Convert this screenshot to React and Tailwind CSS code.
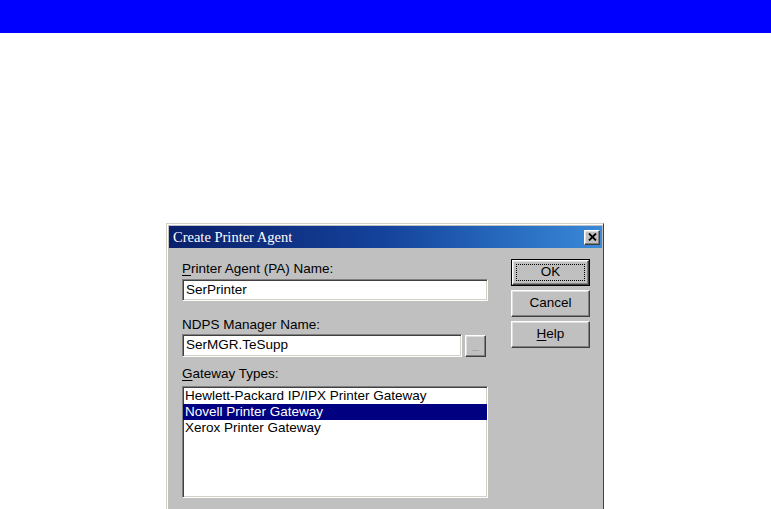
import React from "react";

const sunken =
  "border-t border-l border-t-[#808080] border-l-[#808080] border-b border-r border-b-white border-r-white shadow-[inset_1px_1px_0_#404040,inset_-1px_-1px_0_#d4d0c8]";
const raised =
  "border-t border-l border-t-white border-l-white border-b border-r border-b-[#404040] border-r-[#404040] shadow-[inset_-1px_-1px_0_#808080,inset_1px_1px_0_#dfdfdf]";

function Button({ children, isDefault }) {
  if (isDefault) {
    return (
      <div className="h-[27px] w-[79px] border border-black">
        <div className={`h-full w-full ${raised} bg-[#c0c0c0] p-[3px]`}>
          <div className="flex h-full w-full items-center justify-center border border-dotted border-black">
            {children}
          </div>
        </div>
      </div>
    );
  }
  return (
    <div className={`flex h-[27px] w-[79px] items-center justify-center ${raised} bg-[#c0c0c0]`}>
      {children}
    </div>
  );
}

export default function App() {
  return (
    <div
      className="relative h-[509px] w-[771px] overflow-hidden bg-white"
      style={{ fontFamily: '"Liberation Sans", Arial, sans-serif' }}
    >
      <div className="h-[33px] w-full bg-[#0000ff]" />
      <div className="ml-[166px] mt-[190px] h-[300px] w-[438px] border-t border-l border-t-[#d4d0c8] border-l-[#d4d0c8] border-r border-r-[#404040] bg-[#c0c0c0] p-[1px] shadow-[inset_1px_1px_0_#ffffff]">
        <div className="pl-[1px] pt-[1px]">
          <div className="flex h-[22px] items-center justify-between bg-gradient-to-r from-[#0a1f6a] via-[#15439c] to-[#3a8ad8] pl-[4px] pr-[2px]">
            <span
              className="text-[14.5px] leading-none text-white"
              style={{ fontFamily: '"Liberation Serif", "Times New Roman", serif' }}
            >
              Create Printer Agent
            </span>
            <div className={`flex h-[15px] w-[16px] items-center justify-center ${raised} bg-[#c0c0c0]`}>
              <svg width="9" height="8" viewBox="0 0 9 8">
                <path d="M1 0.5 L8 7.5 M8 0.5 L1 7.5" stroke="#000" strokeWidth="1.8" />
              </svg>
            </div>
          </div>
          <div className="flex text-[13.5px] text-black">
            <div className="ml-[13px] flex w-[306px] flex-col pt-[12px]">
              <div className="h-[17px] leading-[17px]">
                <span className="underline underline-offset-2">P</span>rinter Agent (PA) Name:
              </div>
              <div className={`mt-[2px] flex h-[22px] items-center bg-white pl-[3px] ${sunken}`}>
                SerPrinter
              </div>
              <div className="mt-[15px] h-[17px] leading-[17px]">NDPS Manager Name:</div>
              <div className="mt-[1px] flex items-center gap-[3px]">
                <div className={`flex h-[23px] w-[280px] items-center bg-white pl-[3px] ${sunken}`}>
                  SerMGR.TeSupp
                </div>
                <div className={`flex h-[22px] w-[21px] items-end justify-center pb-[3px] ${raised} bg-[#c0c0c0] text-[9px] leading-none text-[#808080]`}>
                  ...
                </div>
              </div>
              <div className="mt-[8px] h-[17px] leading-[17px]">
                <span className="underline underline-offset-2">G</span>ateway Types:
              </div>
              <div className={`mt-[4px] h-[112px] w-[306px] bg-white pt-[1px] ${sunken}`}>
                <div className="h-[16px] pl-[2px] leading-[16px]">Hewlett-Packard IP/IPX Printer Gateway</div>
                <div className="h-[16px] bg-[#000080] pl-[2px] leading-[16px] text-white">Novell Printer Gateway</div>
                <div className="h-[16px] pl-[2px] leading-[16px]">Xerox Printer Gateway</div>
              </div>
            </div>
            <div className="ml-[23px] flex flex-col gap-[4px] pt-[11px]">
              <Button isDefault>OK</Button>
              <Button>Cancel</Button>
              <Button>
                <span>
                  <span className="underline underline-offset-2">H</span>elp
                </span>
              </Button>
            </div>
          </div>
        </div>
      </div>
    </div>
  );
}
